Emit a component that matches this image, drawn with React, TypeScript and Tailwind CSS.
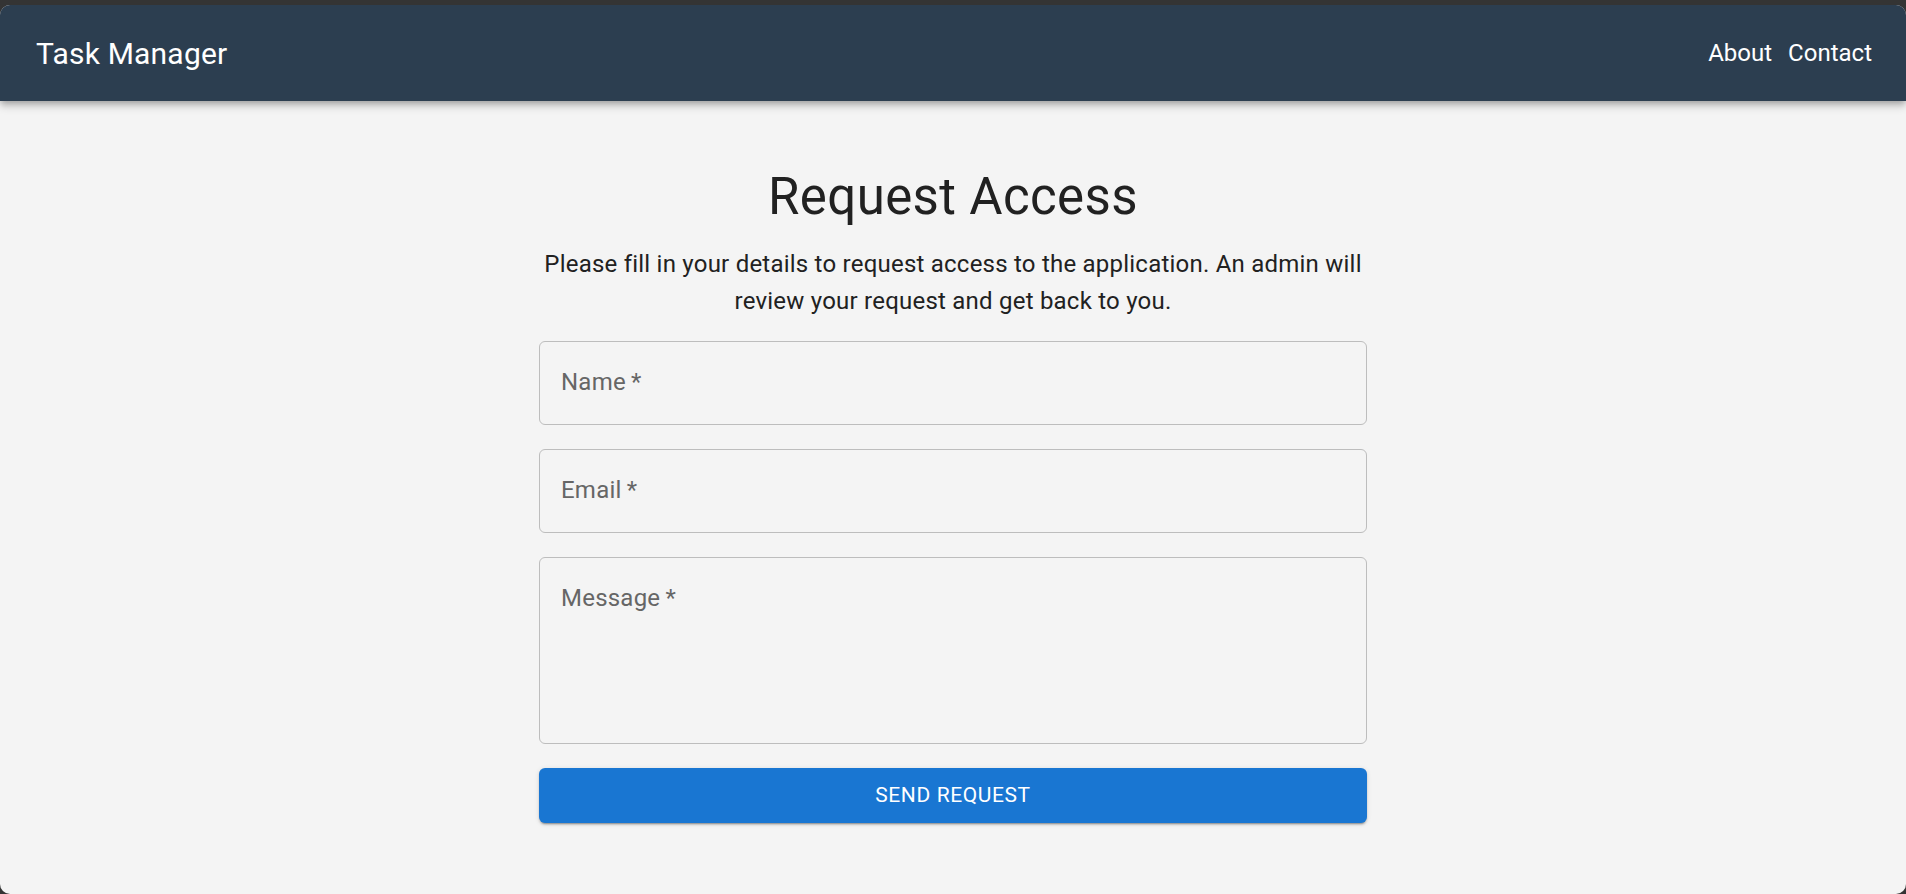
import { useState } from 'react'

type FieldProps = {
    label: string
    multiline?: boolean
}

function OutlinedField({ label, multiline }: FieldProps) {
    const [value, setValue] = useState<string>("")
    const heightClass = multiline ? "h-[187px]" : "h-[84px]"

    return (
        <div className={`relative w-full ${heightClass} rounded-[6px] border border-[#bdbdbd] bg-transparent`}>
            {value.length === 0 && (
                <div className="pointer-events-none absolute left-[21px] top-[22px] text-[24px] leading-[36px] tracking-[0.225px] text-[#666666]">
                    {label}{"\u2009*"}
                </div>
            )}
            {multiline
                ? <textarea className="h-full w-full resize-none bg-transparent px-[21px] pt-[22px] text-[24px] leading-[36px] text-[#212121] outline-none" value={value} onChange={(e) => setValue(e.target.value)} />
                : <input className="h-full w-full bg-transparent px-[21px] text-[24px] text-[#212121] outline-none" value={value} onChange={(e) => setValue(e.target.value)} />
            }
        </div>
    )
}

export default function App() {
    return (
        <div className="min-h-screen bg-[#343434] pt-[5px] font-['Roboto','Liberation_Sans',sans-serif]">
            <div className="flex h-[889px] flex-col overflow-hidden rounded-[10px] bg-[#f4f4f4]">
                <header className="relative z-10 flex h-[96px] shrink-0 items-center justify-between bg-[#2c3e50] pl-[36px] pr-[34px] text-white shadow-[0_3px_6px_-1px_rgba(0,0,0,0.25),0_6px_8px_0_rgba(0,0,0,0.14)]">
                    <h1 className="text-[30px] font-normal tracking-[0.2px]">Task Manager</h1>
                    <nav className="flex flex-row gap-[16px] text-[24px]">
                        <a href="#about">About</a>
                        <a href="#contact">Contact</a>
                    </nav>
                </header>
                <main className="flex flex-col items-center pt-[64px]">
                    <div className="flex w-[828px] flex-col items-center">
                        <h2 className="text-[51px] font-normal leading-[63px] tracking-[0.375px] text-[#212121]">Request Access</h2>
                        <p className="mt-[18px] text-center text-[24px] leading-[37px] tracking-[0.225px] text-[#212121]">
                            Please fill in your details to request access to the application. An admin will review your request and get back to you.
                        </p>
                        <form className="mt-[21px] flex w-full flex-col gap-[24px]" onSubmit={(e) => e.preventDefault()}>
                            <OutlinedField label="Name" />
                            <OutlinedField label="Email" />
                            <OutlinedField label="Message" multiline />
                            <button type="submit" className="h-[55px] w-full rounded-[6px] bg-[#1976d2] text-[21px] font-normal uppercase tracking-[0.6px] text-white shadow-[0_3px_1px_-2px_rgba(0,0,0,0.2),0_2px_2px_0_rgba(0,0,0,0.14),0_1px_5px_0_rgba(0,0,0,0.12)]">
                                Send Request
                            </button>
                        </form>
                    </div>
                </main>
            </div>
        </div>
    )
}
